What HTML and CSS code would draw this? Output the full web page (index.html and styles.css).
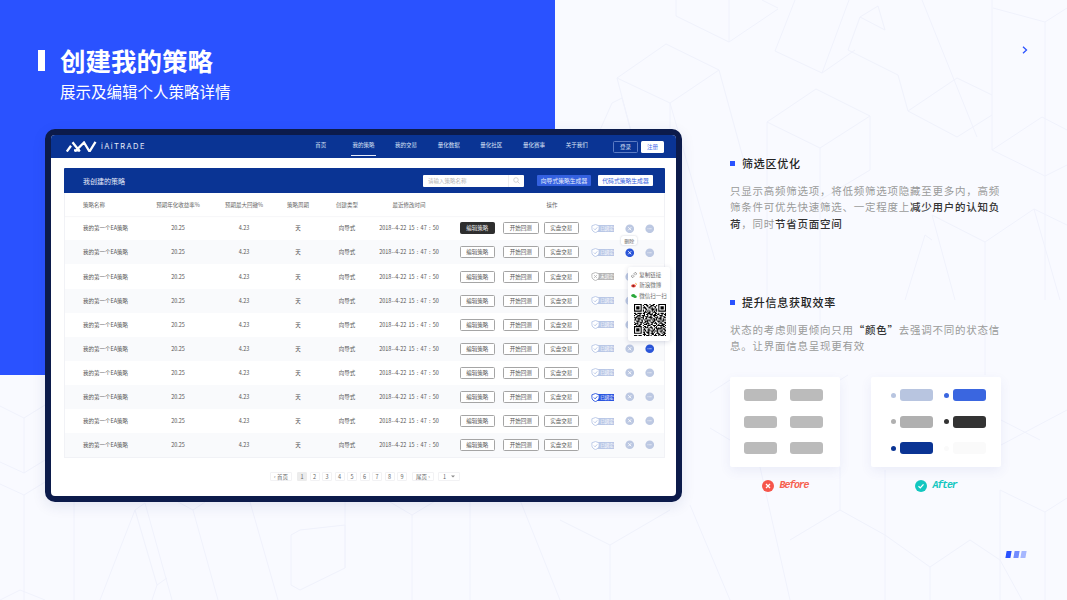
FILE: index.html
```html
<!DOCTYPE html>
<html lang="zh-CN">
<head>
<meta charset="utf-8">
<title>创建我的策略</title>
<link rel="stylesheet" href="styles.css">
</head>
<body>
<svg class="defs" width="0" height="0" aria-hidden="true">
  <symbol id="i-x" viewBox="0 0 10 10"><circle cx="5" cy="5" r="4.6" fill="currentColor"/><path d="M3.4 3.4l3.2 3.2M6.6 3.4L3.4 6.6" stroke="#fff" stroke-width=".9" fill="none"/></symbol>
  <symbol id="i-more" viewBox="0 0 10 10"><circle cx="5" cy="5" r="4.6" fill="currentColor"/><path d="M2.6 5h4.8" stroke="#fff" stroke-opacity=".75" stroke-width=".9" stroke-dasharray="1 .4" fill="none"/></symbol>
  <symbol id="i-ok" viewBox="0 0 10 10"><path d="M5 .6l4 1.4v3c0 2.3-1.7 3.7-4 4.5C2.7 8.700 1 7.300 1 5V2z" fill="#fff" stroke="currentColor" stroke-width="1"/><path d="M3.100 5l1.500 1.500 2.400-2.800" stroke="currentColor" stroke-width="1" fill="none"/></symbol>
  <symbol id="i-no" viewBox="0 0 10 10"><path d="M5 .6l4 1.400v3c0 2.300-1.700 3.700-4 4.500C2.700 8.700 1 7.300 1 5V2z" fill="#fff" stroke="currentColor" stroke-width="1"/><path d="M3.500 3.500l3 3M6.500 3.500l-3 3" stroke="currentColor" stroke-width="1" fill="none"/></symbol>
</svg>

<main class="slide">
  <div class="blue-block"></div>
  <svg class="bg-lines" width="1067" height="600" viewBox="0 0 1067 600" aria-hidden="true">
    <path d="M676 0V16L729 42L778 9M729 0V42M762 0L778 8
      M617 78L666 44L719 70L670 103Z M617 78L632 135M670 103L715 260M719 70L745 165M670 103V129
      M612 103L622 98L632 135M612 103L600 130
      M775 51L795 0M775 51L822 73L855 50M822 73L849 0
      M848 50L860 17L885 30L878 6L860 17M848 50L898 75L908 111L957 137L992 115M908 111L957 78L992 95M922 0L977 137
      M993 8L1045 22L1067 8M992 0V150L1045 176L1067 165M1045 22V300M992 150L1042 117L1067 130
      M767 122L816 89L870 116L820 148ZM767 122V300M870 116V170L820 200M820 148V350
      M932 215L985 242L1034 209L1067 225M985 242V375M932 215L955 300M1034 209L1060 300M932 240L925 235L905 300
      M710 393L730 380M710 428L730 440M840 380L848 375M1001 445L1067 410M1001 420L1040 440
      M0 406L24 418L45 405M24 418V473M0 462L24 473L45 460M0 484L24 495L45 482M24 495V600M74 502V600
      M135 510L100 600M135 510L145 503L172 600M135 510L157 585L167 578M157 585L152 600
      M178 502L193 510L205 502M193 510L218 600M250 502L278 600M300 530L291 535V585L300 590L345 568V525L300 530
      M0 600L20 590L45 600
      M345 502L345 568M390 502L412 515L470 480M412 515V600M470 500V600M520 500L560 600M560 520L610 545L670 510M610 545V600
      M690 505L730 600M760 467L790 600M790 540L840 510L885 535V600M840 510V467M885 470V535M885 535L930 567L970 540L1000 560V600M930 567V600
      M1000 490L1045 512L1067 498M1045 512V600M1000 490L1000 560M1000 560L1022 600"/>
  </svg>

  <section class="left">
    <div class="title-row">
      <span class="title-bar"></span>
      <h1 class="title">创建我的策略</h1>
    </div>
    <p class="subtitle">展示及编辑个人策略详情</p>

    <div class="device">
      <header class="topbar">
        <div class="logo">
          <svg class="logo-mark" width="31" height="11" viewBox="0 0 31 11"><path fill="none" stroke="#fff" stroke-width="2.300" d="M.8 10.500L5 4.800M6.500 1.200L13.800 10.500M8 9.300H14M9 10.500L18 1.500L23.500 10.500L29.500 .8"/></svg>
          <span class="logo-text">iAiTRADE</span>
        </div>
        <nav class="nav">
          <a class="nav-item">首页</a>
          <a class="nav-item is-active">我的策略</a>
          <a class="nav-item">我的交易</a>
          <a class="nav-item">量化数据</a>
          <a class="nav-item">量化社区</a>
          <a class="nav-item">量化赛事</a>
          <a class="nav-item">关于我们</a>
        </nav>
        <div class="auth">
          <a class="btn-login">登录</a>
          <a class="btn-register">注册</a>
        </div>
      </header>

      <div class="content">
        <div class="card">
          <div class="card-head">
            <h2 class="card-title">我创建的策略</h2>
            <div class="search">
              <span class="search-text">请输入策略名称</span>
              <span class="search-icon"><svg width="7" height="7" viewBox="0 0 7 7"><circle cx="3" cy="3" r="2.300" fill="none" stroke="#bbb" stroke-width=".6"/><path d="M4.700 4.700L6.500 6.500" stroke="#bbb" stroke-width=".6"/></svg></span>
            </div>
            <a class="gen gen-blue">向导式策略生成器</a>
            <a class="gen gen-white">代码式策略生成器</a>
          </div>

          <div class="row row-head">
            <span class="c-name">策略名称</span><span>预期年化收益率%</span><span>预期最大回撤%</span><span>策略周期</span><span>创建类型</span><span>最近修改时间</span><span class="c-ophead">操作</span>
          </div>

          <div class="row">
            <span class="c-name">我的第一个EA策略</span><span>20.25</span><span>4.23</span><span>天</span><span>向导式</span><span>2018--4-22 15 : 47 : 50</span>
            <div class="ops"><a class="op is-dark">编辑策略</a><a class="op op-b">开始回测</a><a class="op op-c">实盘交易</a>
              <span class="badge"><svg class="badge-icon"><use href="#i-ok"/></svg><span class="badge-text">已绑定</span></span>
              <span class="act"><svg class="act-icon"><use href="#i-x"/></svg></span><span class="act"><svg class="act-icon"><use href="#i-more"/></svg></span></div>
          </div>
          <div class="row is-alt">
            <span class="c-name">我的第一个EA策略</span><span>20.25</span><span>4.23</span><span>天</span><span>向导式</span><span>2018--4-22 15 : 47 : 50</span>
            <div class="ops"><a class="op">编辑策略</a><a class="op op-b">开始回测</a><a class="op op-c">实盘交易</a>
              <span class="badge"><svg class="badge-icon"><use href="#i-ok"/></svg><span class="badge-text">已绑定</span></span>
              <span class="act is-on"><svg class="act-icon"><use href="#i-x"/></svg><span class="tooltip">删除</span></span><span class="act"><svg class="act-icon"><use href="#i-more"/></svg></span></div>
          </div>
          <div class="row">
            <span class="c-name">我的第一个EA策略</span><span>20.25</span><span>4.23</span><span>天</span><span>向导式</span><span>2018--4-22 15 : 47 : 50</span>
            <div class="ops"><a class="op">编辑策略</a><a class="op op-b">开始回测</a><a class="op op-c">实盘交易</a>
              <span class="badge is-grey"><svg class="badge-icon"><use href="#i-no"/></svg><span class="badge-text">未绑定</span></span>
              <span class="act"><svg class="act-icon"><use href="#i-x"/></svg></span><span class="act"><svg class="act-icon"><use href="#i-more"/></svg></span></div>
          </div>
          <div class="row is-alt">
            <span class="c-name">我的第一个EA策略</span><span>20.25</span><span>4.23</span><span>天</span><span>向导式</span><span>2018--4-22 15 : 47 : 50</span>
            <div class="ops"><a class="op">编辑策略</a><a class="op op-b">开始回测</a><a class="op op-c">实盘交易</a>
              <span class="badge"><svg class="badge-icon"><use href="#i-ok"/></svg><span class="badge-text">已绑定</span></span>
              <span class="act"><svg class="act-icon"><use href="#i-x"/></svg></span><span class="act"><svg class="act-icon"><use href="#i-more"/></svg></span></div>
          </div>
          <div class="row">
            <span class="c-name">我的第一个EA策略</span><span>20.25</span><span>4.23</span><span>天</span><span>向导式</span><span>2018--4-22 15 : 47 : 50</span>
            <div class="ops"><a class="op">编辑策略</a><a class="op op-b">开始回测</a><a class="op op-c">实盘交易</a>
              <span class="badge"><svg class="badge-icon"><use href="#i-ok"/></svg><span class="badge-text">已绑定</span></span>
              <span class="act"><svg class="act-icon"><use href="#i-x"/></svg></span><span class="act"><svg class="act-icon"><use href="#i-more"/></svg></span></div>
          </div>
          <div class="row is-alt">
            <span class="c-name">我的第一个EA策略</span><span>20.25</span><span>4.23</span><span>天</span><span>向导式</span><span>2018--4-22 15 : 47 : 50</span>
            <div class="ops"><a class="op">编辑策略</a><a class="op op-b">开始回测</a><a class="op op-c">实盘交易</a>
              <span class="badge"><svg class="badge-icon"><use href="#i-ok"/></svg><span class="badge-text">已绑定</span></span>
              <span class="act"><svg class="act-icon"><use href="#i-x"/></svg></span>
              <span class="act is-on"><svg class="act-icon"><use href="#i-more"/></svg>
                <div class="popover">
                  <div class="pop-row"><svg class="pop-icon" viewBox="0 0 6 6"><path d="M2.500 3.500L3.500 2.500M1.800 2.700L.9 3.600a1 1 0 0 0 1.500 1.500l.9-.9M2.700 1.800L3.600.9a1 1 0 0 1 1.500 1.500l-.9.9" fill="none" stroke="#555" stroke-width=".6"/></svg>复制链接</div>
                  <div class="pop-row"><svg class="pop-icon" viewBox="0 0 6 6"><ellipse cx="2.500" cy="3.800" rx="2.300" ry="1.600" fill="#e8392e"/><circle cx="2.300" cy="3.900" r=".7" fill="#222"/><path d="M4 1.200a1.500 1.500 0 0 1 1.500 1.800" stroke="#f0a020" stroke-width=".6" fill="none"/></svg>新浪微博</div>
                  <div class="pop-row"><svg class="pop-icon" viewBox="0 0 6 6"><ellipse cx="2.300" cy="2.600" rx="2.100" ry="1.600" fill="#2aa83a"/><ellipse cx="4.100" cy="3.800" rx="1.700" ry="1.300" fill="#2aa83a"/></svg>微信扫一扫</div>
                  <svg class="qr" viewBox="0 0 29 29" width="32" height="32"><path fill="none" stroke="#000" d="M0 .5h7M9 .5h3M14 .5h1M17 .5h2M22 .5h7M0 1.500h1M6 1.500h1M8 1.500h1M11 1.500h2M15 1.500h3M20 1.500h1M22 1.500h1M28 1.500h1M0 2.500h1M2 2.500h3M6 2.500h1M9 2.500h1M12 2.500h1M14 2.500h2M18 2.500h2M22 2.500h1M24 2.500h3M28 2.500h1M0 3.500h1M2 3.500h3M6 3.500h1M8 3.500h3M13 3.500h2M16 3.500h1M19 3.500h1M22 3.500h1M24 3.500h3M28 3.500h1M0 4.500h1M2 4.500h3M6 4.500h1M10 4.500h2M15 4.500h4M20 4.500h1M22 4.500h1M24 4.500h3M28 4.500h1M0 5.500h1M6 5.500h1M8 5.500h1M11 5.500h1M13 5.500h1M16 5.500h2M19 5.500h2M22 5.500h1M28 5.500h1M0 6.500h7M8 6.500h1M10 6.500h1M12 6.500h1M14 6.500h1M16 6.500h1M18 6.500h1M20 6.500h1M22 6.500h7M9 7.500h3M13 7.500h2M17 7.500h3M0 8.500h2M3 8.500h4M8 8.500h2M12 8.500h3M16 8.500h1M19 8.500h2M22 8.500h1M24 8.500h3M28 8.500h1M1 9.500h2M5 9.500h1M9 9.500h1M11 9.500h2M14 9.500h3M18 9.500h2M21 9.500h2M25 9.500h1M27 9.500h2M0 10.500h1M3 10.500h3M7 10.500h3M12 10.500h1M15 10.500h1M17 10.500h4M23 10.500h3M28 10.500h1M2 11.500h2M5 11.500h1M8 11.500h1M10 11.500h3M14 11.500h2M18 11.500h1M21 11.500h1M24 11.500h1M26 11.500h2M0 12.500h3M4 12.500h1M6 12.500h3M11 12.500h1M13 12.500h4M19 12.500h3M23 12.500h2M27 12.500h2M1 13.500h1M3 13.500h3M8 13.500h1M10 13.500h2M15 13.500h1M17 13.500h2M20 13.500h1M22 13.500h3M26 13.500h1M0 14.500h2M4 14.500h1M6 14.500h2M9 14.500h1M12 14.500h3M16 14.500h1M18 14.500h3M24 14.500h1M26 14.500h3M2 15.500h3M7 15.500h1M10 15.500h3M14 15.500h1M17 15.500h2M21 15.500h3M25 15.500h2M0 16.500h1M3 16.500h1M5 16.500h3M9 16.500h2M12 16.500h1M15 16.500h3M19 16.500h1M22 16.500h1M24 16.500h1M27 16.500h2M1 17.500h3M6 17.500h1M8 17.500h1M11 17.500h3M16 17.500h1M18 17.500h3M23 17.500h3M28 17.500h1M0 18.500h2M3 18.500h1M5 18.500h2M9 18.500h3M13 18.500h1M15 18.500h2M20 18.500h1M22 18.500h1M25 18.500h3M2 19.500h1M4 19.500h2M8 19.500h1M12 19.500h3M17 19.500h3M21 19.500h6M28 19.500h1M0 20.500h7M9 20.500h2M12 20.500h1M15 20.500h1M18 20.500h1M20 20.500h1M24 20.500h1M26 20.500h2M0 21.500h1M6 21.500h1M8 21.500h1M10 21.500h3M14 21.500h3M19 21.500h2M22 21.500h1M24 21.500h2M28 21.500h1M0 22.500h1M2 22.500h3M6 22.500h1M9 22.500h1M13 22.500h1M16 22.500h1M18 22.500h1M20 22.500h5M26 22.500h2M0 23.500h1M2 23.500h3M6 23.500h1M8 23.500h3M12 23.500h3M17 23.500h2M21 23.500h1M25 23.500h1M27 23.500h2M0 24.500h1M2 24.500h3M6 24.500h1M10 24.500h1M13 24.500h1M15 24.500h3M19 24.500h3M23 24.500h3M28 24.500h1M0 25.500h1M6 25.500h1M8 25.500h2M11 25.500h3M16 25.500h1M18 25.500h1M21 25.500h1M24 25.500h1M26 25.500h2M0 26.500h7M9 26.500h1M12 26.500h2M15 26.500h3M20 26.500h3M25 26.500h1M27 26.500h2M8 27.500h3M13 27.500h1M16 27.500h2M19 27.500h1M22 27.500h2M26 27.500h2M0 28.500h3M4 28.500h3M9 28.500h1M11 28.500h3M15 28.500h1M18 28.500h3M22 28.500h1M24 28.500h3M28 28.500h1"/></svg>
                </div>
              </span></div>
          </div>
          <div class="row">
            <span class="c-name">我的第一个EA策略</span><span>20.25</span><span>4.23</span><span>天</span><span>向导式</span><span>2018--4-22 15 : 47 : 50</span>
            <div class="ops"><a class="op">编辑策略</a><a class="op op-b">开始回测</a><a class="op op-c">实盘交易</a>
              <span class="badge"><svg class="badge-icon"><use href="#i-ok"/></svg><span class="badge-text">已绑定</span></span>
              <span class="act"><svg class="act-icon"><use href="#i-x"/></svg></span><span class="act"><svg class="act-icon"><use href="#i-more"/></svg></span></div>
          </div>
          <div class="row is-alt">
            <span class="c-name">我的第一个EA策略</span><span>20.25</span><span>4.23</span><span>天</span><span>向导式</span><span>2018--4-22 15 : 47 : 50</span>
            <div class="ops"><a class="op">编辑策略</a><a class="op op-b">开始回测</a><a class="op op-c">实盘交易</a>
              <span class="badge is-blue"><svg class="badge-icon"><use href="#i-ok"/></svg><span class="badge-text">已绑定</span></span>
              <span class="act"><svg class="act-icon"><use href="#i-x"/></svg></span><span class="act"><svg class="act-icon"><use href="#i-more"/></svg></span></div>
          </div>
          <div class="row">
            <span class="c-name">我的第一个EA策略</span><span>20.25</span><span>4.23</span><span>天</span><span>向导式</span><span>2018--4-22 15 : 47 : 50</span>
            <div class="ops"><a class="op">编辑策略</a><a class="op op-b">开始回测</a><a class="op op-c">实盘交易</a>
              <span class="badge"><svg class="badge-icon"><use href="#i-ok"/></svg><span class="badge-text">已绑定</span></span>
              <span class="act"><svg class="act-icon"><use href="#i-x"/></svg></span><span class="act"><svg class="act-icon"><use href="#i-more"/></svg></span></div>
          </div>
          <div class="row is-alt">
            <span class="c-name">我的第一个EA策略</span><span>20.25</span><span>4.23</span><span>天</span><span>向导式</span><span>2018--4-22 15 : 47 : 50</span>
            <div class="ops"><a class="op">编辑策略</a><a class="op op-b">开始回测</a><a class="op op-c">实盘交易</a>
              <span class="badge"><svg class="badge-icon"><use href="#i-ok"/></svg><span class="badge-text">已绑定</span></span>
              <span class="act"><svg class="act-icon"><use href="#i-x"/></svg></span><span class="act"><svg class="act-icon"><use href="#i-more"/></svg></span></div>
          </div>
        </div>

        <div class="pager">
          <a class="pg pg-prev">‹ 首页</a>
          <div class="pg-nums">
            <a class="pg pg-num is-current">1</a><a class="pg pg-num">2</a><a class="pg pg-num">3</a><a class="pg pg-num">4</a><a class="pg pg-num">5</a><a class="pg pg-num">6</a><a class="pg pg-num">7</a><a class="pg pg-num">8</a><a class="pg pg-num">9</a>
          </div>
          <a class="pg pg-next">尾页 ›</a>
          <a class="pg pg-select">1<svg width="4" height="3" viewBox="0 0 4 3"><path d="M0 .5h4L2 2.500z" fill="#888"/></svg></a>
        </div>
      </div>
    </div>
  </section>

  <section class="right">
    <h3 class="point-head">筛选区优化</h3>
    <p class="point-text">只显示高频筛选项，将低频筛选项隐藏至更多内，高频筛条件可优先快速筛选、一定程度上<strong>减少用户的认知负荷</strong>，同时<strong>节省页面空间</strong></p>
    <h3 class="point-head point-head-2">提升信息获取效率</h3>
    <p class="point-text">状态的考虑则更倾向只用<strong>“颜色”</strong>去强调不同的状态信<br>息。让界面信息呈现更有效</p>

    <div class="compare">
      <figure class="cmp cmp-before">
        <div class="cmp-card">
          <span class="pill"></span><span class="pill"></span>
          <span class="pill"></span><span class="pill"></span>
          <span class="pill"></span><span class="pill"></span>
        </div>
        <figcaption class="cmp-label is-bad">
          <svg width="12" height="12" viewBox="0 0 12 12"><circle cx="6" cy="6" r="6" fill="#f6554b"/><path d="M4 4l4 4M8 4l-4 4" stroke="#fff" stroke-width="1.300"/></svg>Before
        </figcaption>
      </figure>
      <figure class="cmp cmp-after">
        <div class="cmp-card">
          <span class="state st-pale"><i></i><b></b></span><span class="state st-blue"><i></i><b></b></span>
          <span class="state st-grey"><i></i><b></b></span><span class="state st-dark"><i></i><b></b></span>
          <span class="state st-navy"><i></i><b></b></span><span class="state st-ghost"><i></i><b></b></span>
        </div>
        <figcaption class="cmp-label is-good">
          <svg width="12" height="12" viewBox="0 0 12 12"><circle cx="6" cy="6" r="6" fill="#12c7c0"/><path d="M3.500 6.200l1.800 1.700 3.200-3.500" stroke="#fff" stroke-width="1.300" fill="none"/></svg>After
        </figcaption>
      </figure>
    </div>
  </section>

  <svg class="chevron" width="6" height="8" viewBox="0 0 6 8"><path d="M1 .8L4.500 4L1 7.200" fill="none" stroke="#2a52ff" stroke-width="1.300"/></svg>
  <div class="pager-marks"><span></span><span></span><span></span></div>
</main>
</body>
</html>
```

FILE: styles.css
```css
* { box-sizing: border-box; }
html, body { margin: 0; padding: 0; }
body {
  width: 1067px;
  height: 600px;
  overflow: hidden;
  font-family: "Noto Sans CJK SC", "Noto Sans", sans-serif;
}
.defs { display: block; height: 0; width: 0; }
a { display: block; }
h1, h2, h3, p, figure { margin: 0; }

.slide {
  position: relative;
  display: flex;
  width: 1067px;
  height: 600px;
  overflow: hidden;
  background: #f9faff;
}
.blue-block {
  position: absolute;
  left: 0;
  top: 0;
  width: 555px;
  height: 375px;
  background: #2a52ff;
}
.bg-lines {
  position: absolute;
  left: 0;
  top: 0;
  fill: none;
  stroke: #f0f2fc;
  stroke-width: 1;
}

/* left column */
.left {
  position: relative;
  width: 682px;
  padding: 45px 0 0 38px;
  flex: none;
}
.title-row {
  display: flex;
  align-items: center;
  gap: 15px;
  height: 30px;
}
.title-bar { width: 7px; height: 21px; margin-top: 1px; background: #fff; }
.title {
  font-size: 25.5px;
  line-height: 30px;
  font-weight: 700;
  color: #fff;
}
.subtitle {
  margin: 5px 0 0 22px;
  font-size: 15.5px;
  line-height: 22px;
  color: #fff;
}

.device {
  display: flex;
  flex-direction: column;
  width: 637px;
  height: 373px;
  margin: 27px 0 0 7px;
  border: 6px solid #0c1b4b;
  border-radius: 10px;
  background: #fff;
  box-shadow: 0 4px 14px rgba(30, 50, 120, .1);
  font-size: 5.5px;
  line-height: 8px;
  color: #555;
}
.topbar {
  display: flex;
  align-items: center;
  flex: none;
  height: 23px;
  padding: 0 12px 0 15px;
  background: #0a3494;
  border-radius: 4px 4px 0 0;
  color: #dbe3f7;
}
.logo { display: flex; align-items: center; gap: 4px; }
.logo-mark { display: block; }
.logo-text {
  font-family: "Inter", sans-serif;
  font-size: 7.5px;
  line-height: 10px;
  letter-spacing: 1.4px;
  color: #e8edfa;
}
.nav { display: flex; margin-left: auto; height: 23px; }
.nav-item {
  position: relative;
  width: 42.67px;
  line-height: 20px;
  text-align: center;
}
.nav-item.is-active::after {
  content: "";
  position: absolute;
  left: 9px;
  right: 9px;
  bottom: 2px;
  height: 1px;
  background: #e8edfa;
}
.auth { display: flex; gap: 3px; margin-left: 15px; }
.btn-login, .btn-register {
  height: 12px;
  line-height: 10px;
  text-align: center;
  border-radius: 1.5px;
}
.btn-login { width: 25px; border: 1px solid #5d7cc4; }
.btn-register { width: 23px; line-height: 12px; background: #fff; color: #4a70ea; }

.content { flex: 1; min-height: 0; padding: 10px 11px 0 13px; }
.card {
  border: 1px solid #f1f2f6;
  border-top: 0;
  background: #fff;
}
.card-head {
  display: flex;
  align-items: center;
  height: 25px;
  margin: 0 -1px;
  padding-right: 12px;
  padding-left: 19px;
  background: #0a3494;
  border-radius: 1px 1px 0 0;
}
.card-title {
  font-size: 7px;
  line-height: 10px;
  font-weight: 400;
  color: #e8edfa;
}
.search {
  display: flex;
  align-items: center;
  width: 101px;
  height: 12px;
  margin-left: auto;
  padding-left: 5px;
  background: #fff;
  border-radius: 1px;
  color: #b4b4b4;
}
.search-text { flex: 1; }
.search-icon {
  display: flex;
  align-items: center;
  justify-content: center;
  width: 16px;
  height: 12px;
  border-left: 1px solid #eee;
}
.gen {
  width: 54px;
  height: 11px;
  line-height: 11px;
  text-align: center;
  border-radius: 1px;
  font-size: 5.8px;
}
.gen-blue { margin-left: 13px; background: #3461e0; color: #e8edfa; }
.gen-white { width: 55px; margin-left: 7px; background: #fff; color: #3461e0; }

.row {
  position: relative;
  display: grid;
  grid-template-columns: 78px 70px 62px 46px 52px 72px 220px;
  align-items: center;
  height: 24.1px;
  text-align: center;
}
.row > span:nth-child(6) { word-spacing: 1px; white-space: nowrap; }
.row-head {
  height: 23.3px;
  color: #666;
  box-shadow: 0 1px 1px rgba(40, 50, 90, .04);
}
.is-alt { background: #f9fafc; }
.c-name { padding-left: 18px; text-align: left; }
.c-ophead { padding-left: 101.5px; text-align: left; }

.ops { display: flex; align-items: center; padding-left: 14.5px; }
.op {
  flex: none;
  width: 35.5px;
  height: 12px;
  line-height: 10px;
  text-align: center;
  border: 1px solid #a5a5a5;
  border-radius: 1.5px;
  background: #fff;
}
.op.is-dark { background: #2e2e2e; border-color: #2e2e2e; color: #eee; }
.op-b { margin-left: 8px; }
.op-c { margin-left: 5px; }
.badge {
  --badge: #b9c7e6;
  position: relative;
  display: flex;
  align-items: center;
  flex: none;
  width: 23px;
  height: 9px;
  margin-left: 12px;
  color: var(--badge);
}
.badge-icon { position: relative; z-index: 1; width: 9px; height: 9px; flex: none; }
.badge-text {
  width: 17px;
  height: 7px;
  margin-left: -3px;
  padding-left: 3px;
  font-size: 4.5px;
  line-height: 7px;
  color: #fff;
  background: var(--badge);
  text-align: center;
}
.badge.is-grey { --badge: #b5b5b5; }
.badge.is-blue { --badge: #2a55e0; }
.act {
  position: relative;
  display: flex;
  flex: none;
  width: 9.5px;
  height: 9.5px;
  margin-left: 10.5px;
  color: #bcc8e2;
}
.act.is-on { color: #2a55d8; }
.act-icon { display: block; width: 9.5px; height: 9.5px; }

.tooltip {
  position: absolute;
  left: 50%;
  bottom: 12px;
  width: 16px;
  height: 9px;
  margin-left: -8px;
  text-align: center;
  line-height: 9px;
  font-size: 5px;
  color: #666;
  background: #fff;
  border-radius: 2px;
  box-shadow: 0 0 2px rgba(60, 70, 110, .3);
}
.popover {
  position: absolute;
  left: 50%;
  bottom: 13px;
  z-index: 2;
  width: 42px;
  height: 74px;
  margin-left: -21px;
  padding: 3px 0 0 3px;
  text-align: left;
  color: #666;
  background: #fff;
  border-radius: 2px;
  box-shadow: 0 1px 5px rgba(50, 60, 110, .2);
}
.pop-row {
  display: flex;
  align-items: center;
  gap: 2px;
  height: 10.5px;
  white-space: nowrap;
}
.pop-icon { flex: none; width: 6px; height: 6px; }
.qr { display: block; margin: 2.5px 0 0 3px; }

.pager {
  display: flex;
  align-items: center;
  gap: 5px;
  margin-top: 14px;
  padding-left: 206px;
  color: #666;
}
.pg {
  display: flex;
  align-items: center;
  justify-content: center;
  height: 9px;
  border: 1px solid #f2f2f4;
  border-radius: 1px;
  background: #fff;
  font-size: 5.5px;
}
.pg-prev { width: 22px; }
.pg-nums { display: flex; gap: 2.5px; }
.pg-num { width: 10px; }
.pg-num.is-current { background: #ececec; border-color: #ececec; }
.pg-next { width: 22px; }
.pg-select { width: 22px; gap: 5px; margin-left: -1px; }

/* right column */
.right {
  position: relative;
  width: 300px;
  margin-left: 48px;
  padding-top: 155px;
}
.point-head {
  display: flex;
  align-items: center;
  gap: 7px;
  font-size: 11px;
  line-height: 16px;
  font-weight: 500;
  letter-spacing: .75px;
  color: #222;
}
.point-head::before {
  content: "";
  flex: none;
  width: 5px;
  height: 5px;
  background: #2a52ff;
}
.point-head-2 { margin-top: 61.75px; }
.point-text {
  width: 272px;
  margin-top: 11.75px;
  font-size: 10.5px;
  line-height: 16.5px;
  letter-spacing: .75px;
  color: #9a9a9a;
}
.point-text strong { font-weight: 500; color: #333; }

.compare { display: flex; gap: 31px; margin-top: 22.25px; }
.cmp { flex: none; }
.cmp-before { width: 110px; }
.cmp-after { width: 130px; }
.cmp-card {
  display: grid;
  height: 90px;
  background: #fff;
  border-radius: 2px;
  box-shadow: 0 4px 12px rgba(60, 80, 160, .08);
}
.cmp-before .cmp-card {
  grid-template-columns: 33px 33px;
  column-gap: 13px;
  row-gap: 14.5px;
  align-content: start;
  padding: 12px 0 0 14px;
}
.pill { height: 12px; border-radius: 3px; background: #bbb; }
.cmp-after .cmp-card {
  grid-template-columns: 42px 42px;
  column-gap: 11px;
  row-gap: 14.5px;
  align-content: start;
  padding: 12px 0 0 19.5px;
}
.state { display: flex; align-items: center; gap: 4px; height: 12px; }
.state i { flex: none; width: 5px; height: 5px; border-radius: 50%; background: var(--c); }
.state b { flex: none; width: 33px; height: 12px; border-radius: 3px; background: var(--c); }
.st-pale { --c: #b8c5e0; }
.st-blue { --c: #3a66e0; }
.st-grey { --c: #b0b0b0; }
.st-dark { --c: #333; }
.st-navy { --c: #0a3494; }
.st-ghost { --c: #fafafa; }

.cmp-label {
  display: flex;
  align-items: center;
  justify-content: center;
  gap: 6px;
  height: 14px;
  margin-top: 12px;
  font-family: "Liberation Mono", monospace;
  font-size: 10px;
  font-weight: 700;
  font-style: italic;
  letter-spacing: -1.2px;
  line-height: 14px;
}
.is-bad { color: #f6604f; }
.is-good { gap: 5px; color: #12c7c0; }

.chevron { position: absolute; left: 1022px; top: 46px; }
.pager-marks {
  position: absolute;
  left: 1006px;
  top: 551px;
  display: flex;
  gap: 2.5px;
}
.pager-marks span {
  width: 5px;
  height: 7px;
  background: #2a52ff;
  transform: skewX(-10deg);
}
.pager-marks span:nth-child(2) { opacity: .65; }
.pager-marks span:nth-child(3) { opacity: .4; }
```
